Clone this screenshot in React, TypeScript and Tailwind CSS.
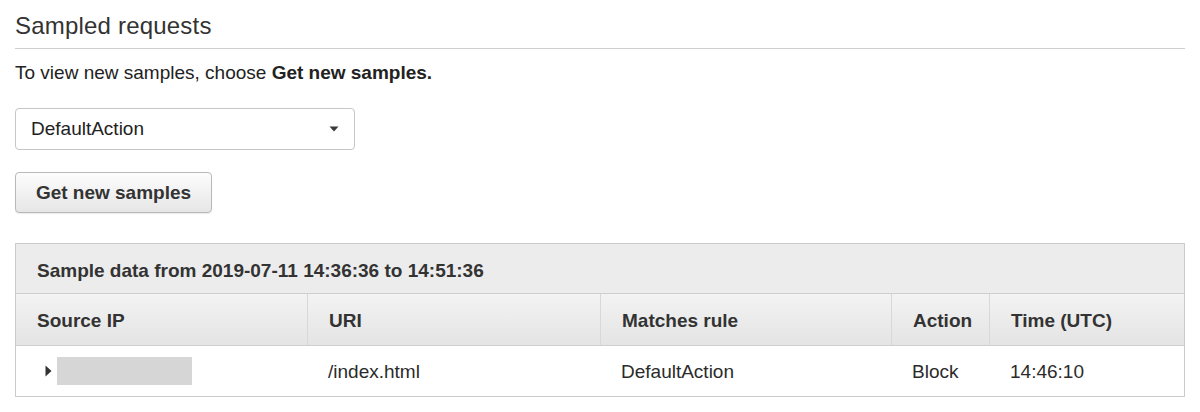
const columns = [
  { key: 'ip', label: 'Source IP' },
  { key: 'uri', label: 'URI' },
  { key: 'rule', label: 'Matches rule' },
  { key: 'action', label: 'Action' },
  { key: 'time', label: 'Time (UTC)' },
];

const samples = [
  { uri: '/index.html', rule: 'DefaultAction', action: 'Block', time: '14:46:10' },
];

function Caret() {
  return (
    <svg width="10" height="6" viewBox="0 0 10 6" className="shrink-0">
      <path d="M0.5 0.5 L9.5 0.5 L5 5.5 Z" fill="#3a3a3a" />
    </svg>
  );
}

function ExpandArrow() {
  return (
    <svg width="7" height="12" viewBox="0 0 7 12" className="shrink-0">
      <path d="M0.5 0.5 L6.5 6 L0.5 11.5 Z" fill="#333" />
    </svg>
  );
}

export default function App() {
  return (
    <div className="min-h-screen bg-white px-[15px] text-[#2b2b2b] font-['Liberation_Sans',Arial,sans-serif]">
      {/* Header */}
      <div className="pt-[13px] pb-[9px] border-b border-[#cfcfcf]">
        <h2 className="text-[24px] leading-[26px] font-normal tracking-[0.2px] text-[#333]">
          Sampled requests
        </h2>
      </div>

      <p className="mt-[13px] text-[19px] leading-[22px] text-[#222]">
        To view new samples, choose <span className="font-bold">Get new samples.</span>
      </p>

      {/* Rule select */}
      <div className="mt-[24px] w-[340px] h-[42px] flex items-center justify-between pl-[15px] pr-[15px] border border-[#c6c6c6] rounded-[4px] bg-white">
        <span className="text-[19px] leading-[20px] text-[#222]">DefaultAction</span>
        <Caret />
      </div>

      <button className="mt-[22px] w-[197px] h-[41px] flex items-center justify-center border border-[#b9b9b9] rounded-[4px] bg-gradient-to-b from-[#fdfdfd] to-[#e6e6e6] shadow-[0_1px_1px_rgba(0,0,0,0.08)] text-[19px] leading-[20px] font-bold text-[#333]">
        Get new samples
      </button>

      {/* Sample table */}
      <div className="mt-[30px] border border-[#cbcbcb]">
        <div className="h-[50px] pt-[17px] pl-[21px] bg-[#ececec] border-b border-[#cfcfcf] text-[19px] leading-[20px] font-bold text-[#333]">
          Sample data from 2019-07-11 14:36:36 to 14:51:36
        </div>

        <div className="grid grid-cols-[291px_293px_291px_98px_1fr] h-[52px] border-b border-[#cfcfcf] bg-gradient-to-b from-[#f3f3f3] to-[#e4e4e4]">
          {columns.map((col, idx) => (
            <div
              key={col.key}
              className={`pt-[17px] pl-[21px] text-[19px] leading-[20px] font-bold text-[#333] ${idx > 0 ? 'border-l border-[#d8d8d8]' : ''}`}
            >
              {col.label}
            </div>
          ))}
        </div>

        {samples.map((row, idx) => (
          <div key={idx} className="grid grid-cols-[291px_293px_291px_98px_1fr] h-[50px] text-[19px] leading-[20px] text-[#2b2b2b]">
            <div className="flex items-center pl-[29px] gap-[5px]">
              <ExpandArrow />
              <div className="w-[135px] h-[28px] bg-[#d6d6d6]" />
            </div>
            <div className="pt-[16px] pl-[21px]">{row.uri}</div>
            <div className="pt-[16px] pl-[21px]">{row.rule}</div>
            <div className="pt-[16px] pl-[21px]">{row.action}</div>
            <div className="pt-[16px] pl-[21px]">{row.time}</div>
          </div>
        ))}
      </div>
    </div>
  );
}
